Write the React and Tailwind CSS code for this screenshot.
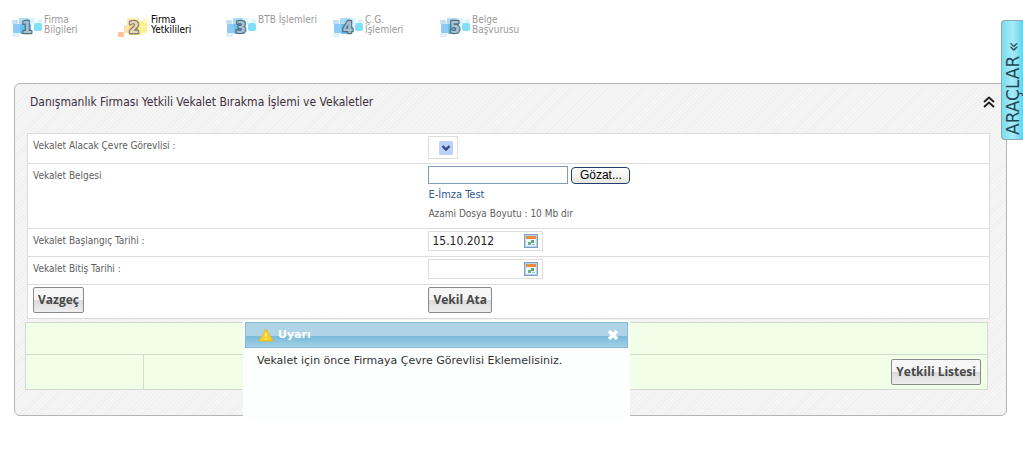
import { useState } from "react";

const steps = [
  { no: 1, lines: ["Firma", "Bilgileri"] },
  { no: 2, lines: ["Firma", "Yetkilileri"], active: true },
  { no: 3, lines: ["BTB İşlemleri"] },
  { no: 4, lines: ["Ç.G.", "İşlemleri"] },
  { no: 5, lines: ["Belge", "Başvurusu"] },
];

const BlueBlocks = () => (
  <>
    <rect x="1" y="5" width="6" height="4" rx="1" fill="#c4dffa" />
    <rect x="8" y="3" width="10" height="8" rx="1" fill="#a9dcfa" />
    <rect x="2" y="9" width="8" height="9" rx="1" fill="#8fc9fa" />
    <rect x="9" y="9" width="11" height="10" rx="1" fill="#63c4f8" />
    <rect x="1" y="18" width="7" height="4" rx="1" fill="#dff1fd" />
    <rect x="18" y="3" width="6" height="6" rx="1" fill="#d9f5fd" />
    <rect x="23" y="8" width="8" height="8" rx="2" fill="#7fe0f8" />
    <rect x="26" y="4" width="5" height="4" rx="1" fill="#d9f5fd" />
  </>
);

const YellowBlocks = () => (
  <>
    <rect x="0" y="17" width="6" height="5" rx="1" fill="#fbc39c" />
    <rect x="6" y="10" width="7" height="8" rx="1" fill="#fde0b4" />
    <rect x="9" y="3" width="12" height="9" rx="1" fill="#fdeeb5" />
    <rect x="11" y="10" width="12" height="10" rx="1" fill="#fcd873" />
    <rect x="20" y="6" width="9" height="12" rx="2" fill="#fdf38c" />
    <rect x="25" y="3" width="5" height="5" rx="1" fill="#fefad0" />
  </>
);

const StepIcon = ({ no, active }) => (
  <svg width="33" height="24" viewBox="0 0 33 24" className="shrink-0" aria-hidden="true">
    {active ? <YellowBlocks /> : <BlueBlocks />}
    <text
      x="16"
      y="18"
      textAnchor="middle"
      fontFamily="'DejaVu Sans', sans-serif"
      fontSize="15"
      fontWeight="bold"
      fill={active ? "#e3d9c4" : "#a5c3d6"}
      stroke={active ? "#85796c" : "#5b6b78"}
      strokeWidth="2.4"
      strokeLinejoin="round"
      paintOrder="stroke"
    >
      {no}
    </text>
  </svg>
);

const ChevronsIcon = () => (
  <svg width="12" height="12" viewBox="0 0 12 12" fill="none" stroke="#222" strokeWidth="2">
    <path d="M1 6 L6 1.5 L11 6 M1 11 L6 6.5 L11 11" />
  </svg>
);

const CalendarIcon = () => (
  <svg width="14" height="14" viewBox="0 0 14 14">
    <rect x="0.5" y="0.5" width="13" height="13" fill="#b9d3ee" stroke="#7f9fc6" />
    <rect x="2" y="2" width="10" height="10" fill="#eef5fb" />
    <rect x="2" y="2" width="10" height="3" fill="#f08a3c" />
    <rect x="7" y="6" width="3" height="3" fill="#5fa56c" />
    <rect x="4" y="8" width="3" height="3" fill="#6fb08a" />
    <rect x="8" y="10" width="3" height="1" fill="#9cc0e0" />
  </svg>
);

const WarningIcon = () => (
  <svg width="16" height="14" viewBox="0 0 16 14" aria-hidden="true">
    <path d="M8 1 L15 13 H1 Z" fill="#fbd02b" stroke="#eebb1c" strokeLinejoin="round" />
    <path d="M8 5 V9 M8 10.2 V11.6" stroke="#fff2b8" strokeWidth="1.4" />
  </svg>
);

const GrayButton = ({ children }) => (
  <button
    type="button"
    className="block h-[26px] rounded-xs border border-[#8a8a8a] bg-linear-to-b from-[#f6f6f6] from-50% via-[#dadada] via-50% to-[#efefef] px-1 font-['Open_Sans',sans-serif] text-xs font-bold text-[#484848]"
  >
    {children}
  </button>
);

const FormRow = ({ id, label, children, className = "" }) => (
  <div className={`grid grid-cols-[5fr_7fr] border-b border-[#dcdcdc] ${className}`}>
    <label htmlFor={id} className="px-[5px] pt-1.5 text-[10px] leading-3 text-[#606060]">
      {label}
    </label>
    <div className="pt-0.5">{children}</div>
  </div>
);

const DateField = ({ id, value, onChange }) => (
  <div className="flex h-5 w-[115px] items-center border border-[#dedede] bg-white">
    <input
      id={id}
      type="text"
      value={value}
      onChange={(e) => onChange(e.target.value)}
      className="h-full min-w-0 flex-1 px-[3px] text-xs text-[#222] outline-none"
    />
    <button type="button" aria-label="Takvim" className="mr-1">
      <CalendarIcon />
    </button>
  </div>
);

const App = () => {
  const [startDate, setStartDate] = useState("15.10.2012");
  const [endDate, setEndDate] = useState("");
  const [fileName, setFileName] = useState("");
  const [open, setOpen] = useState(true);
  const [warning, setWarning] = useState(true);

  return (
    <div className="relative min-h-screen bg-white font-['DejaVu_Sans_Condensed','DejaVu_Sans',sans-serif]">
      <ol className="flex pt-[15px] pl-[11px]">
        {steps.map((s) => (
          <li key={s.no} className="flex w-[107px]">
            <StepIcon no={s.no} active={s.active} />
            <span
              className={`text-[10px] leading-[10px] whitespace-nowrap ${s.active ? "text-black" : "text-[#999]"}`}
            >
              {s.lines.map((l) => (
                <span key={l} className="block">
                  {l}
                </span>
              ))}
            </span>
          </li>
        ))}
      </ol>

      <section className="mt-11 mr-4 ml-3.5 rounded-md border border-[#b5b5b5] bg-[#f3f3f3] bg-[repeating-linear-gradient(135deg,#f5f5f5_0px,#f5f5f5_2px,#efefef_2px,#efefef_3px)] pt-2.5 pr-4 pb-[25px] pl-3">
        <div className="flex items-center justify-between pb-[23px] pl-[3px]">
          <h1 className="text-xs leading-4 text-[#3c3040]">
            Danışmanlık Firması Yetkili Vekalet Bırakma İşlemi ve Vekaletler
          </h1>
          <button
            type="button"
            aria-label="Paneli daralt"
            onClick={() => setOpen(!open)}
            className="-mr-[5px]"
          >
            <ChevronsIcon />
          </button>
        </div>

        {open && (
          <>
            <form className="border border-b-0 border-[#dcdcdc] bg-white">
              <FormRow id="gorevli" label="Vekalet Alacak Çevre Görevlisi :" className="h-[30px]">
                <div className="relative h-[23px] w-[30px] border border-[#dedede]">
                  <select id="gorevli" className="h-full w-full appearance-none outline-none">
                    <option value=""></option>
                  </select>
                  <svg
                    width="14"
                    height="14"
                    viewBox="0 0 14 14"
                    className="pointer-events-none absolute top-1 right-1"
                  >
                    <rect width="14" height="14" rx="1" fill="#bdd2f8" />
                    <path d="M3.5 5 L7 8.5 L10.5 5" fill="none" stroke="#2f4a82" strokeWidth="2.4" />
                  </svg>
                </div>
              </FormRow>

              <FormRow id="belge" label="Vekalet Belgesi" className="pb-1.5">
                <div className="flex items-center gap-[3px]">
                  <input
                    id="belge"
                    type="text"
                    value={fileName}
                    onChange={(e) => setFileName(e.target.value)}
                    className="h-[18px] w-[140px] border border-[#7f9db9] bg-white px-1 text-xs outline-none"
                  />
                  <button
                    type="button"
                    className="h-[17px] w-[59px] rounded-sm border border-[#1f3f6e] bg-linear-to-b from-white to-[#e8e8e0] font-['Liberation_Sans',sans-serif] text-xs leading-[14px] text-black"
                  >
                    Gözat...
                  </button>
                </div>
                <a href="#" className="mt-[3px] block w-fit text-[11px] leading-4 text-[#2f5d92]">
                  E-İmza Test
                </a>
                <p className="mt-[3px] text-[10px] leading-4 text-[#606060]">
                  Azami Dosya Boyutu : 10 Mb dır
                </p>
              </FormRow>

              <FormRow id="baslangic" label="Vekalet Başlangıç Tarihi :" className="h-7">
                <DateField id="baslangic" value={startDate} onChange={setStartDate} />
              </FormRow>

              <FormRow id="bitis" label="Vekalet Bitiş Tarihi :" className="h-7">
                <DateField id="bitis" value={endDate} onChange={setEndDate} />
              </FormRow>

              <div className="grid h-[34px] grid-cols-[5fr_7fr] border-b border-[#dcdcdc] pt-0.5">
                <div className="pl-[5px]">
                  <GrayButton>Vazgeç</GrayButton>
                </div>
                <div>
                  <GrayButton>Vekil Ata</GrayButton>
                </div>
              </div>
            </form>

            <div className="mt-[3px] mr-0.5 -ml-0.5 border border-[#d3dccf] bg-[#f1ffe8]">
              <div className="h-8 border-b border-[#d3dccf]" />
              <div className="flex h-[34px]">
                <div className="w-[118px] border-r border-[#d3dccf]" />
                <div className="flex flex-1 items-center justify-end pr-1.5">
                  <GrayButton>Yetkili Listesi</GrayButton>
                </div>
              </div>
            </div>
          </>
        )}
      </section>

      {warning && (
        <div
          role="alertdialog"
          aria-labelledby="uyari"
          className="absolute top-80 left-[243px] h-[101px] w-[387px] bg-[#fdfefe] p-0.5 font-['DejaVu_Sans',sans-serif]"
        >
          <div className="flex h-[26px] items-center border border-[#85b9d3] bg-linear-to-b from-[#b0d4e7] from-55% via-[#78bad8] via-55% to-[#a2d1e7] pr-2 pl-3">
            <WarningIcon />
            <h2 id="uyari" className="ml-1 flex-1 text-[11px] font-bold text-white">
              Uyarı
            </h2>
            <button type="button" aria-label="Kapat" onClick={() => setWarning(false)}>
              <svg width="12" height="12" viewBox="0 0 12 12" stroke="#fff" strokeWidth="3.4">
                <path d="M2 2 L10 10 M10 2 L2 10" />
              </svg>
            </button>
          </div>
          <p className="px-3 pt-[5px] text-[11px] leading-4 text-[#333]">
            Vekalet için önce Firmaya Çevre Görevlisi Eklemelisiniz.
          </p>
        </div>
      )}

      <button
        type="button"
        className="absolute top-5 right-0 flex h-[120px] w-[22px] rotate-180 items-center gap-1 rounded-r-sm border border-l-0 border-[#8aa9b0] bg-linear-to-r from-[#62d3ea] via-[#a5ecf8] to-[#7cdcef] pt-1 font-['DejaVu_Sans',sans-serif] text-[17px] leading-5 text-[#1d4752] [writing-mode:vertical-rl]"
      >
        <span>ARAÇLAR</span>
        <span>«</span>
      </button>
    </div>
  );
};

export default App;
